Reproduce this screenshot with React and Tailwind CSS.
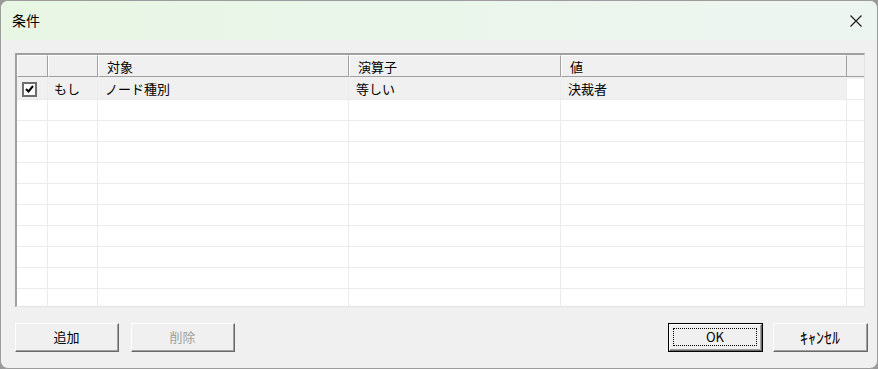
import React from "react";

const font = { fontFamily: '"Noto Sans CJK JP", "Noto Sans", sans-serif' };

const cols = [31, 50, 251, 212, 286];

function HeaderCell({ w, children }) {
  return (
    <div
      className="h-full flex items-center pl-[8px] border-r border-b border-r-[#a0a0a0] border-b-[#a0a0a0] border-t border-l border-t-white border-l-white bg-[#f0f0f0] text-[13px] text-black leading-none overflow-hidden whitespace-nowrap"
      style={{ width: w }}
    >
      {children}
    </div>
  );
}

function Check() {
  return (
    <div className="w-[15px] h-[15px] border-2 border-[#6d6d6d] bg-white flex items-center justify-center">
      <svg width="9" height="8" viewBox="0 0 9 8">
        <path d="M1 4 L3.5 6.5 L8 1" stroke="#000" strokeWidth="2" fill="none" />
      </svg>
    </div>
  );
}

function Row({ first, cells }) {
  return (
    <div className="flex h-[21px] shrink-0">
      {cols.map((w, i) => (
        <div
          key={i}
          className={`h-full flex items-center border-r border-b border-[#ececec] text-[13px] text-black whitespace-nowrap overflow-hidden ${first ? "bg-[#f0f0f0]" : "bg-white"} ${i === 0 ? "pl-[5px]" : i === 1 ? "pl-[6px]" : "pl-[7px]"}`}
          style={{ width: w }}
        >
          {cells ? cells[i] : null}
        </div>
      ))}
      <div className="flex-1 h-full border-b border-[#ececec] bg-white" />
    </div>
  );
}

function Btn({ children, w, disabled, def, big }) {
  return (
    <div
      className={`h-[29px] flex items-center justify-center bg-[#f0f0f0] ${def ? "border border-black" : ""}`}
      style={{ width: w }}
    >
      <div className="w-full h-full border-t border-l border-white border-r border-b border-r-[#696969] border-b-[#696969] flex">
        <div className="flex-1 border-r border-b border-[#a0a0a0] flex items-center justify-center p-[3px]">
          {def ? (
            <div className="w-full h-full border border-dotted border-black flex items-center justify-center text-[13px] text-black">
              {children}
            </div>
          ) : (
            <span className={`${big ? "text-[16px]" : "text-[13px]"} ${disabled ? "text-[#a0a0a0]" : "text-black"}`}>{children}</span>
          )}
        </div>
      </div>
    </div>
  );
}

export default function App() {
  return (
    <div className="w-[878px] h-[369px] bg-[#9a9a9a] overflow-hidden" style={font}>
      <div className="w-full h-full rounded-[8px] border border-[#9c9c9c] bg-[#f0f0f0] flex flex-col overflow-hidden">
        <div className="h-[39px] shrink-0 flex items-center justify-between pl-[11px] pr-[15px] bg-gradient-to-r from-[#e8f6e4] to-[#edf5f1]">
          <span className="text-[14px] text-black">条件</span>
          <svg width="12" height="12" viewBox="0 0 12 12">
            <path d="M0.5 0.5 L11.5 11.5 M11.5 0.5 L0.5 11.5" stroke="#1a1a1a" strokeWidth="1.1" />
          </svg>
        </div>
        <div className="flex-1 flex flex-col px-[14px] pt-[13px]">
          <div className="w-[850px] h-[254px] border-t-2 border-l-2 border-t-[#a0a0a0] border-l-[#a0a0a0] border-r border-b border-r-[#e3e3e3] border-b-[#e3e3e3] bg-white flex flex-col overflow-hidden">
            <div className="flex h-[22px] shrink-0 bg-[#f0f0f0]">
              <HeaderCell w={31} />
              <HeaderCell w={50} />
              <HeaderCell w={251}>対象</HeaderCell>
              <HeaderCell w={212}>演算子</HeaderCell>
              <HeaderCell w={286}>値</HeaderCell>
              <div className="flex-1 h-full border-b border-[#a0a0a0] bg-[#f0f0f0]" />
            </div>
            <div className="h-[2px] shrink-0 bg-[#f0f0f0]" />
            <Row first cells={[<Check />, "もし", "ノード種別", "等しい", "決裁者"]} />
            {Array.from({ length: 10 }).map((_, i) => (
              <Row key={i} />
            ))}
          </div>
          <div className="flex items-center mt-[16px] mr-[-5px]">
            <Btn w={104}>追加</Btn>
            <div className="w-[12px]" />
            <Btn w={104} disabled>削除</Btn>
            <div className="flex-1" />
            <Btn w={95} def>OK</Btn>
            <div className="w-[10px]" />
            <Btn w={95} big>ｷｬﾝｾﾙ</Btn>
          </div>
        </div>
      </div>
    </div>
  );
}
